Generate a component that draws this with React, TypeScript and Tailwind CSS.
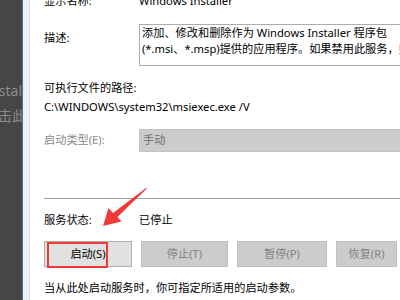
export default function App() {
  const font = { fontFamily: '"Segoe UI", "Noto Sans", "Noto Sans CJK SC", sans-serif' };
  return (
    <div className="relative flex h-[300px] w-[400px] overflow-hidden bg-white text-[11.2px] text-black" style={font}>
      {/* background window edge */}
      <div className="relative w-[22px] shrink-0 overflow-hidden bg-[#464646] text-[14px] text-[#8c8c8c]">
        <div className="absolute right-0 top-[80px] whitespace-nowrap">Instal</div>
        <div className="absolute right-[-4px] top-[105px] whitespace-nowrap">点击此</div>
      </div>
      <div className="w-px shrink-0 bg-[#2b79d0]" />
      <div className="w-[6px] shrink-0 bg-[#f0f0f0]" />
      <div className="w-px shrink-0 bg-[#dadada]" />

      <div className="flex min-w-0 flex-1 flex-col pl-[14px]">
        <div className="-mt-[7px] flex h-[16px] items-center leading-[16px]">
          <span className="w-[95px] shrink-0">显示名称:</span>
          <span className="whitespace-nowrap">Windows Installer</span>
        </div>

        <div className="mt-[15px] flex h-[42px]">
          <span className="mt-[6px] w-[95px] shrink-0 leading-[16px]">描述:</span>
          <div className="flex-1 overflow-hidden border border-r-0 border-[#acacac] pl-[2px] leading-[16px]">
            <div className="whitespace-nowrap">添加、修改和删除作为 Windows Installer 程序包</div>
            <div className="whitespace-nowrap">(*.msi、*.msp)提供的应用程序。如果禁用此服务，则任何</div>
          </div>
        </div>

        <div className="mt-[14px] leading-[16px]">可执行文件的路径:</div>
        <div className="mt-[3px] whitespace-nowrap leading-[16px]">C:\WINDOWS\system32\msiexec.exe /V</div>

        <div className="mt-[14px] flex h-[23px] items-center">
          <span className="w-[95px] shrink-0 text-[#8b8b8b]">启动类型(E):</span>
          <div className="flex h-full flex-1 items-center border border-r-0 border-[#c4c4c4] bg-[#cccccc] pl-[3px] text-[#6d6d6d]">
            手动
          </div>
        </div>

        <div className="mt-[46px] h-px bg-[#a0a0a0]" />

        <div className="mt-[13px] flex h-[16px] items-center leading-[16px]">
          <span className="w-[95px] shrink-0">服务状态:</span>
          <span>已停止</span>
        </div>

        <div className="mt-[13px] flex h-[26px] gap-[9px]">
          <button className="w-[88px] shrink-0 border border-[#adadad] bg-[#e1e1e1]">启动(S)</button>
          <button className="w-[87px] shrink-0 border border-[#bfbfbf] bg-[#cccccc] text-[#838383]">停止(T)</button>
          <button className="w-[90px] shrink-0 border border-[#bfbfbf] bg-[#cccccc] text-[#838383]">暂停(P)</button>
          <button className="w-[61px] shrink-0 border border-[#bfbfbf] bg-[#cccccc] text-[#838383]">恢复(R)</button>
        </div>

        <div className="mt-[13px] whitespace-nowrap leading-[16px]">当从此处启动服务时，你可指定所适用的启动参数。</div>
      </div>

      {/* annotation overlay */}
      <div className="absolute left-[47px] top-[242px] h-[26px] w-[61px] border-2 border-[#f03a3a]" />
      <svg className="absolute left-0 top-0" width="400" height="300" viewBox="0 0 400 300">
        <polygon
          points="103,226 108.5,208 113,213 146.3,187.7 146.8,188.4 117.5,217 121.5,221.5"
          fill="#f03a3a"
        />
      </svg>
    </div>
  );
}
